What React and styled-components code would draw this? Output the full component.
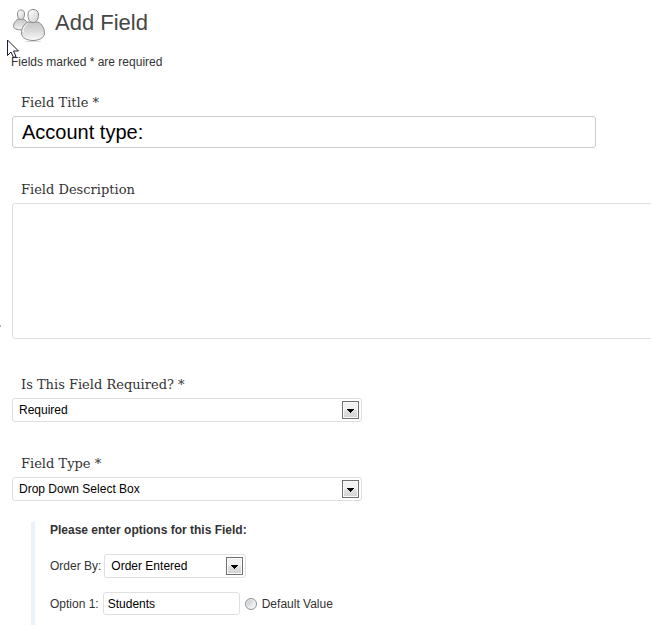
import React from "react";
import styled, { createGlobalStyle } from "styled-components";

const GlobalStyle = createGlobalStyle`
  * { box-sizing: border-box; }
  body {
    margin: 0;
    background: #fff;
    color: #333;
    font: 12px/16px "Liberation Sans", Arial, sans-serif;
    overflow: hidden;
  }
`;

const Page = styled.main`
  position: relative;
  padding: 8px 0 0 12px;
`;

const Header = styled.header`
  display: flex;
  align-items: center;
  gap: 9px;
  height: 34px;
`;

const Title = styled.h1`
  margin: 0;
  padding-bottom: 4px;
  font-size: 22px;
  line-height: 28px;
  font-weight: 400;
  color: #464646;
`;

const Note = styled.p`
  margin: 12px 0 0 -1px;
`;

const Pointer = styled.svg`
  position: absolute;
  left: 7px;
  top: 39px;
`;

const EdgeMark = styled.span`
  position: absolute;
  left: 0;
  top: 325px;
  width: 1px;
  height: 2px;
  background: #b0b0b0;
`;

const Field = styled.section`
  display: flex;
  flex-direction: column;
  align-items: flex-start;
  margin-top: ${(p) => p.$gap}px;
`;

const FieldLabel = styled.label`
  margin: 0 0 2px 9px;
  font: 13px/22px "DejaVu Serif", Georgia, serif;
`;

const TitleInput = styled.input`
  width: calc(100% - 55px);
  height: 32px;
  padding: 0 9px;
  border: 1px solid #ccc;
  border-radius: 3px;
  background: #fff;
  color: #000;
  font: 20px "Liberation Sans", Arial, sans-serif;
  outline: none;
`;

const Description = styled.textarea`
  display: block;
  width: calc(100% + 12px);
  height: 136px;
  border: 1px solid #dfdfdf;
  border-radius: 3px;
  background: #fff;
  resize: none;
  outline: none;
`;

const SelectFrame = styled.span`
  position: relative;
  display: block;
  width: ${(p) => p.$width}px;
  max-width: 100%;
`;

const SelectBox = styled.select`
  display: block;
  appearance: none;
  width: 100%;
  height: 24px;
  padding: 0 24px 0 6px;
  border: 1px solid #dfdfdf;
  border-radius: 3px;
  background: #fff;
  color: #000;
  font: 12px "Liberation Sans", Arial, sans-serif;
  outline: none;
`;

const ArrowButton = styled.span`
  position: absolute;
  top: 3px;
  right: 3px;
  display: flex;
  align-items: center;
  justify-content: center;
  width: 17px;
  height: 18px;
  padding-top: 2px;
  border: 1px solid #707070;
  background: linear-gradient(#f2f2f2 50%, #e2e2e2 50%, #d2d2d2);
  box-shadow: inset 0 0 0 1px #fafafa;
  pointer-events: none;
`;

const Options = styled.fieldset`
  min-width: 0;
  margin: 21px 0 0 19px;
  padding: 0 0 24px 15px;
  border: 0;
  border-left: 4px solid #eaf2fa;
`;

const OptionsTitle = styled.h2`
  margin: 0;
  font-size: 12px;
  line-height: 16px;
`;

const OptionRow = styled.div`
  display: flex;
  align-items: center;
  gap: ${(p) => p.$space}px;
  margin-top: ${(p) => p.$gap}px;
`;

const OptionInput = styled.input`
  width: 137px;
  height: 23px;
  padding: 0 4px;
  border: 1px solid #dfdfdf;
  border-radius: 3px;
  color: #000;
  font: 12px "Liberation Sans", Arial, sans-serif;
  outline: none;
`;

const Radio = styled.input`
  appearance: none;
  width: 12px;
  height: 12px;
  margin: 0 1px;
  border: 1px solid #8e8f8f;
  border-radius: 50%;
  background: linear-gradient(135deg, #b9bec4, #f4f4f4 75%);
  box-shadow: inset 0 0 0 1px #f4f4f4;
`;

function PeopleIcon() {
  return (
    <svg width="34" height="34" viewBox="0 0 34 34" aria-hidden="true">
      <defs>
        <linearGradient id="body" x1="0" y1="0" x2="0" y2="1">
          <stop offset="0" stopColor="#c6c6c6" />
          <stop offset="0.5" stopColor="#dadada" />
          <stop offset="1" stopColor="#fafafa" />
        </linearGradient>
        <linearGradient id="head" x1="0" y1="0" x2="1" y2="1">
          <stop offset="0" stopColor="#fff" />
          <stop offset="1" stopColor="#d0d0d0" />
        </linearGradient>
      </defs>
      <g stroke="#8c8c8c">
        <path d="M6 11C3 13 1.500 15.500 1.500 18.500C1.500 23 17 23 17 18.500C17 15.500 14 12 11 11Z" fill="url(#body)" />
        <path d="M9 2C6.500 2 5.500 3.500 5.500 6C5.500 9 6.500 11.500 9 11.500C11.500 11.500 12.500 9 12.500 6C12.500 3.500 11.500 2 9 2Z" fill="url(#head)" />
        <path d="M16 14C12 16 9.500 20 9.500 25C9.500 35 32.500 35 32.500 25C32.500 20 30 16 26 14Z" fill="url(#body)" />
        <path d="M21 1.500C17.500 1.500 16 3.500 16 7C16 11 17.500 14.500 21 14.500C24.500 14.500 26.500 11 26.500 7C26.500 3.500 24.500 1.500 21 1.500Z" fill="url(#head)" />
      </g>
      <path d="M11 24C11 20 13 17 15.500 15.500M17.500 6C17.500 4 19 3 21 3" fill="none" stroke="#fff" />
      <path d="M13 33.500h16" stroke="#ddd" />
    </svg>
  );
}

function Select({ id, value, width }) {
  return (
    <SelectFrame $width={width}>
      <SelectBox id={id} defaultValue={value}>
        <option>{value}</option>
      </SelectBox>
      <ArrowButton>
        <svg width="7" height="4" viewBox="0 0 7 4" shapeRendering="crispEdges" aria-hidden="true">
          <path d="M0 0H7V1H6V2H5V3H4V4H3V3H2V2H1V1H0Z" fill="#000" />
        </svg>
      </ArrowButton>
    </SelectFrame>
  );
}

export default function App() {
  return (
    <>
      <GlobalStyle />
      <Page>
        <Header>
          <PeopleIcon />
          <Title>Add Field</Title>
        </Header>
        <Note>Fields marked * are required</Note>
        <form>
          <Field $gap={22}>
            <FieldLabel htmlFor="title">Field Title *</FieldLabel>
            <TitleInput id="title" defaultValue="Account type:" />
          </Field>
          <Field $gap={31}>
            <FieldLabel htmlFor="description">Field Description</FieldLabel>
            <Description id="description" />
          </Field>
          <Field $gap={35}>
            <FieldLabel htmlFor="required">Is This Field Required? *</FieldLabel>
            <Select id="required" value="Required" width={350} />
          </Field>
          <Field $gap={31}>
            <FieldLabel htmlFor="type">Field Type *</FieldLabel>
            <Select id="type" value="Drop Down Select Box" width={350} />
          </Field>
          <Options>
            <OptionsTitle>Please enter options for this Field:</OptionsTitle>
            <OptionRow $gap={16} $space={3}>
              <label htmlFor="order">Order By:</label>
              <Select id="order" value="Order Entered" width={142} />
            </OptionRow>
            <OptionRow $gap={14} $space={4}>
              <label htmlFor="option-1">Option 1:</label>
              <OptionInput id="option-1" defaultValue="Students" />
              <Radio type="radio" name="default" id="default-1" />
              <label htmlFor="default-1">Default Value</label>
            </OptionRow>
          </Options>
        </form>
        <EdgeMark />
        <Pointer width="13" height="20" viewBox="0 0 13 20" aria-hidden="true">
          <path d="M0.500 1V16.500L4 13L6.500 18.500L9 17.500L6.500 12H11.500Z" fill="#fff" stroke="#1c1c30" />
        </Pointer>
      </Page>
    </>
  );
}
